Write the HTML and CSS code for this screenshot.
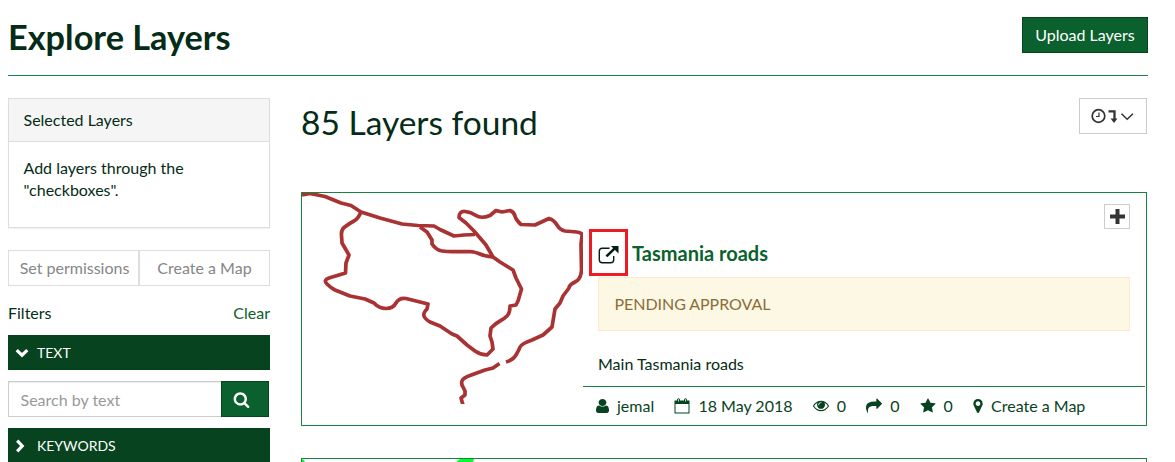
FILE: index.html
```html
<!DOCTYPE html>
<html lang="en">
<head>
<meta charset="utf-8">
<title>Explore Layers</title>
<link rel="stylesheet" href="styles.css">
</head>
<body>
<header class="page-header">
  <h1>Explore Layers</h1>
  <button class="btn-upload">Upload Layers</button>
</header>
<div class="layout">
  <aside class="sidebar">
    <section class="panel">
      <div class="panel-heading">Selected Layers</div>
      <div class="panel-body">Add layers through the "checkboxes".</div>
    </section>
    <div class="actions">
      <button>Set permissions</button>
      <button>Create a Map</button>
    </div>
    <div class="filters"><span>Filters</span><a class="clear">Clear</a></div>
    <div class="filter-bar">
      <svg width="14" height="10" viewBox="0 0 14 10"><path d="M1.700 2.200 7 7.200l5.300-5" fill="none" stroke="#fff" stroke-width="3.200"/></svg>
      <span>TEXT</span>
    </div>
    <div class="search">
      <input type="text" placeholder="Search by text">
      <button class="search-btn" aria-label="Search"><svg width="17" height="17" viewBox="0 0 1792 1792"><path fill="#fff" d="M1216 832q0-185-131.500-316.500t-316.500-131.500-316.500 131.500-131.500 316.500 131.500 316.500 316.500 131.500 316.500-131.500 131.500-316.500zm512 832q0 52-38 90t-90 38q-54 0-90-38l-343-342q-179 124-399 124-143 0-273.500-55.500t-225-150-150-225-55.500-273.500 55.500-273.500 150-225 225-150 273.500-55.500 273.500 55.500 225 150 150 225 55.500 273.500q0 220-124 399l343 343q37 37 37 90z"/></svg></button>
    </div>
    <div class="filter-bar last">
      <svg width="14" height="14" viewBox="0 0 14 14"><path d="M2.200 1.700 7.200 7l-5 5.300" fill="none" stroke="#fff" stroke-width="3.200"/></svg>
      <span>KEYWORDS</span>
    </div>
  </aside>
  <main class="results">
    <div class="results-head">
      <h2>85 Layers found</h2>
      <button class="sort" aria-label="Sort">
        <svg width="44" height="16" viewBox="0 0 44 16" fill="none" stroke="#333">
          <circle cx="7.500" cy="8" r="6.300" stroke-width="1.700"/><path d="M8 4.500v4H5" stroke-width="1.200"/>
          <path d="M17.500 3.300h6v8" stroke-width="2.300"/><path d="M19.500 10.500h7L23 15z" fill="#333" stroke="none"/>
          <path d="m30.500 5.700 5.700 5.600 5.700-5.600" stroke-width="1.500"/>
        </svg>
      </button>
    </div>
    <article class="card">
      <svg class="thumb" width="281" height="211" viewBox="302 193 281 211" fill="none" stroke="#a93232" stroke-width="3.700" stroke-linejoin="round">
        <path d="M302 195 310 193.500 325 196.500 341 203 351 205.500 361 212 380 218 402 224 418 225.500 434 226 440 229.500 454 236 464 235 475 234.500"/>
        <path d="M361 212Q358 219 354 221T344 227.500Q341 230 341.500 236T342 243L349 255 346 263 345.500 273 329 278Q323 280 327 284T335 290L350 296 365 299 374 303Q379 308.500 386 308.500T396 303 406 298.500L428 304 427 309Q423 313 424 316T430 322L440 326 452 334 457 336 467 345 475 351Q481 355 487 355L493 349 492 342 490 336 491 328Q496 323 500 321T507 316 510 306L516 305 518 301 521.500 289 516 278 513 270 500 262 493 257 486 245 474 231 466 223 459 217.500Q459 211 465 211.500T476 215.500 490 215.500L496 210.500 502 212 510 210.500Q514 212 515 216T521 224.500L535 225 549 218.500Q554 220 557 225T565 231L577 232Q583 233 582 236L581 244 581.500 270Q581 279 575 282T569 288L563 296 560 303 555 309 552 327 543 335 532 340Q521 344 520 347T516 355 506 362"/>
        <path d="M420 227 427 232 432 240 432 244Q436 250 442 251T469 251.500Q476 252 480 254T493 257"/>
        <path d="M499.500 363.500 493 368 485 370 470 375.500Q463 378 462 381T463 387L465 391 465 395 461 398 463 405"/>
      </svg>
      <div class="card-body">
        <div class="details">
          <div class="add-row"><button class="add" aria-label="Add"><svg width="17" height="17" viewBox="0 0 17 17"><path d="M8.500 1v15M1 8.500h15" stroke="#333" stroke-width="4"/></svg></button></div>
          <div class="title-row">
            <span class="highlight"><svg width="21" height="19" viewBox="0 0 21 19" fill="none" stroke="#031f11" stroke-width="1.400"><path d="M11.500 3.300H4.300Q1.300 3.300 1.300 6.300v8.400q0 3 3 3h8.400q3 0 3-3V11"/><path d="m8.400 11.400 8.600-8.300" stroke-width="2.600"/><path d="M13 1h7.500v7.500z" fill="#031f11" stroke="none"/></svg></span>
            <h3>Tasmania roads</h3>
          </div>
          <div class="pending">PENDING APPROVAL</div>
          <p class="abstract">Main Tasmania roads</p>
        </div>
        <footer class="meta">
          <span class="m-user"><svg width="13" height="14" viewBox="256 128 1280 1536" preserveAspectRatio="none"><path d="M1536 1399q0 109-62.500 187t-150.500 78h-854q-88 0-150.500-78t-62.500-187q0-85 8.500-160.500t31.500-152 58.500-131 94-89 134.500-34.500q131 128 313 128t313-128q76 0 134.500 34.500t94 89 58.500 131 31.500 152 8.500 160.500zm-256-887q0 159-112.500 271.500t-271.500 112.500-271.500-112.500-112.500-271.500 112.500-271.500 271.500-112.500 271.500 112.500 112.500 271.500z"/></svg>jemal</span>
          <span class="m-date"><svg width="16" height="16" viewBox="0 0 16 16"><path d="M.5 2.500h15v13H.5zM1.500 6v8.500h13V6z" fill-rule="evenodd"/><rect x="3" y=".3" width="3" height="4.200" rx="1.500"/><rect x="10" y=".3" width="3" height="4.200" rx="1.500"/><path d="M4.500 1.200v2.300M11.500 1.200v2.300" stroke="#fff" stroke-width=".8"/></svg>18 May 2018</span>
          <span class="m-views"><svg width="16" height="16" viewBox="0 64 1792 1792"><path d="M1664 960q-152-236-381-353 61 104 61 225 0 185-131.500 316.500t-316.500 131.500-316.500-131.500-131.500-316.500q0-121 61-225-229 117-381 353 133 205 333.500 326.500t434.500 121.500 434.500-121.500 333.500-326.500zm-720-384q0-20-14-34t-34-14q-125 0-214.500 89.500t-89.500 214.500q0 20 14 34t34 14 34-14 14-34q0-86 61-147t147-61q20 0 34-14t14-34zm848 384q0 34-20 69-140 230-376.500 368.500t-499.500 138.500-499.500-139-376.500-368q-20-35-20-69t20-69q140-229 376.500-368t499.500-139 499.500 139 376.500 368q20 35 20 69z"/></svg>0</span>
          <span class="m-share"><svg width="16" height="16" viewBox="0 0 1792 1792"><path d="M1792 640q0 26-19 45l-512 512q-19 19-45 19t-45-19-19-45v-256h-224q-98 0-175.500 6t-154 21.500-133 42.500-105.500 69.500-80 101-48.500 138.500-17.500 181q0 55 5 123 0 6 2.500 23.500t2.500 26.500q0 15-8.500 25t-23.500 10q-16 0-28-17-7-9-13-22t-13.500-30-10.500-24q-127-285-127-451 0-199 53-333 162-403 875-403h224v-256q0-26 19-45t45-19 45 19l512 512q19 19 19 45z"/></svg>0</span>
          <span class="m-star"><svg width="16" height="16" viewBox="0 0 1792 1792"><path d="M1728 647q0 22-26 48l-363 354 86 500q1 7 1 20 0 21-10.500 35.500t-30.500 14.500q-19 0-40-12l-449-236-449 236q-22 12-40 12-21 0-31.500-14.500t-10.500-35.500q0-6 2-20l86-500-364-354q-25-27-25-48 0-37 56-46l502-73 225-455q19-41 49-41t49 41l225 455 502 73q56 9 56 46z"/></svg>0</span>
          <span class="m-map"><svg width="10" height="14" viewBox="384 128 1024 1536"><path d="M1152 640q0-106-75-181t-181-75-181 75-75 181 75 181 181 75 181-75 75-181zm256 0q0 109-33 179l-364 774q-16 33-47.500 52t-67.500 19-67.500-19-46.500-52l-365-774q-33-70-33-179 0-212 150-362t362-150 362 150 150 362z"/></svg>Create a Map</span>
        </footer>
      </div>
    </article>
    <article class="card next">
      <svg width="281" height="3" viewBox="302 459 281 3" fill="#00ff2a"><path d="M302 459.500h1.500l1.500 2.500h-3zM460 459h14l-1 3h-17z"/></svg>
    </article>
  </main>
</div>
</body>
</html>
```
FILE: styles.css
```css
* { box-sizing: border-box; }
html { overflow: hidden; }
body {
  margin: 0;
  height: 462px;
  overflow: hidden;
  background: #fff;
  color: #052c16;
  font: 16px/22px Lato, sans-serif;
}
h1, h2, h3, p { margin: 0; }
button { font: inherit; padding: 0; border-radius: 0; }
svg { display: block; flex: none; }

.page-header {
  display: flex;
  justify-content: space-between;
  align-items: flex-start;
  width: 1140px;
  height: 76px;
  margin-left: 8px;
  padding-top: 17px;
  border-bottom: 1px solid #1f7f48;
}
h1 { font-size: 34.3px; line-height: 39px; font-weight: 700; }
.btn-upload {
  width: 126px;
  height: 36px;
  background: #0b612d;
  border: 1px solid #08451f;
  color: #fff;
}

.layout { display: flex; gap: 31px; padding: 22px 0 0 8px; }
.sidebar { width: 262px; flex: none; }
.panel {
  height: 130px;
  border: 1px solid #ddd;
  box-shadow: 0 1px 1px rgba(0, 0, 0, .05);
}
.panel-heading {
  height: 43px;
  padding: 10px 14.5px;
  background: #f5f5f5;
  border-bottom: 1px solid #ddd;
}
.panel-body { padding: 15px 14.5px; }
.actions { display: flex; height: 36px; margin-top: 22px; }
.actions button {
  width: 131px;
  background: #fff;
  border: 1px solid #ddd;
  color: #868686;
}
.actions button:first-child { padding-left: 2px; }
.filters {
  display: flex;
  justify-content: space-between;
  margin-top: 16px;
  height: 33px;
}
.clear { color: #0b612d; }
.filter-bar {
  display: flex;
  align-items: center;
  gap: 8px;
  height: 35px;
  padding-left: 7px;
  background: #07431e;
  color: #fff;
  font-size: 14px;
}
.filter-bar.last { height: 34px; padding-top: 1px; }
.search { display: flex; width: 261px; height: 36px; margin: 11px 0; }
.search input {
  flex: 1;
  min-width: 0;
  padding: 2px 11.5px 0;
  border: 1px solid #ccc;
  border-right: 0;
  box-shadow: inset 0 1px 1px rgba(0, 0, 0, .075);
  font: inherit;
}
.search input::placeholder { color: #999; }
.search-btn {
  width: 48px;
  padding-left: 11px;
  background: #0b612d;
  border: 1px solid #08451f;
}

.results { width: 846px; flex: none; }
.results-head { display: flex; justify-content: space-between; height: 94px; }
h2 { font-size: 33.5px; line-height: 40px; font-weight: 400; padding-top: 4px; }
.sort {
  width: 68px;
  height: 36px;
  padding-left: 11px;
  background: #fff;
  border: 1px solid #ccc;
}
.card {
  display: flex;
  height: 234px;
  border: 1px solid #178341;
}
.thumb { filter: blur(.4px); }
.next { height: 4px; margin-top: 32px; border-bottom: 0; }
.card-body { width: 562px; }
.details { height: 193px; padding: 11px 15px 0; }
.add-row { display: flex; justify-content: flex-end; height: 25px; }
.add {
  display: flex;
  align-items: center;
  justify-content: center;
  width: 26px;
  height: 25px;
  background: #fff;
  border: 1px solid #ccc;
}
.title-row { display: flex; height: 48px; }
.highlight {
  display: flex;
  align-items: center;
  width: 39px;
  height: 47px;
  margin: 0 4px 0 -9px;
  padding: 4px 0 0 6px;
  border: 3px solid #ed1c24;
}
h3 { font-size: 20px; line-height: 24px; font-weight: 700; padding-top: 12px; color: #0b612d; }
.pending {
  width: 532px;
  height: 54px;
  padding: 15px 15.5px;
  background: #fcf8e3;
  border: 1px solid #faebcc;
  color: #8a6d3b;
  letter-spacing: -.05px;
}
.abstract { padding-top: 22px; }
.meta {
  display: flex;
  align-items: center;
  gap: 20.2px;
  height: 39px;
  padding-left: 13px;
  border-top: 1px solid #178341;
  color: #07431e;
  fill: #07431e;
}
.meta span { display: flex; align-items: center; gap: 8px; }
```
